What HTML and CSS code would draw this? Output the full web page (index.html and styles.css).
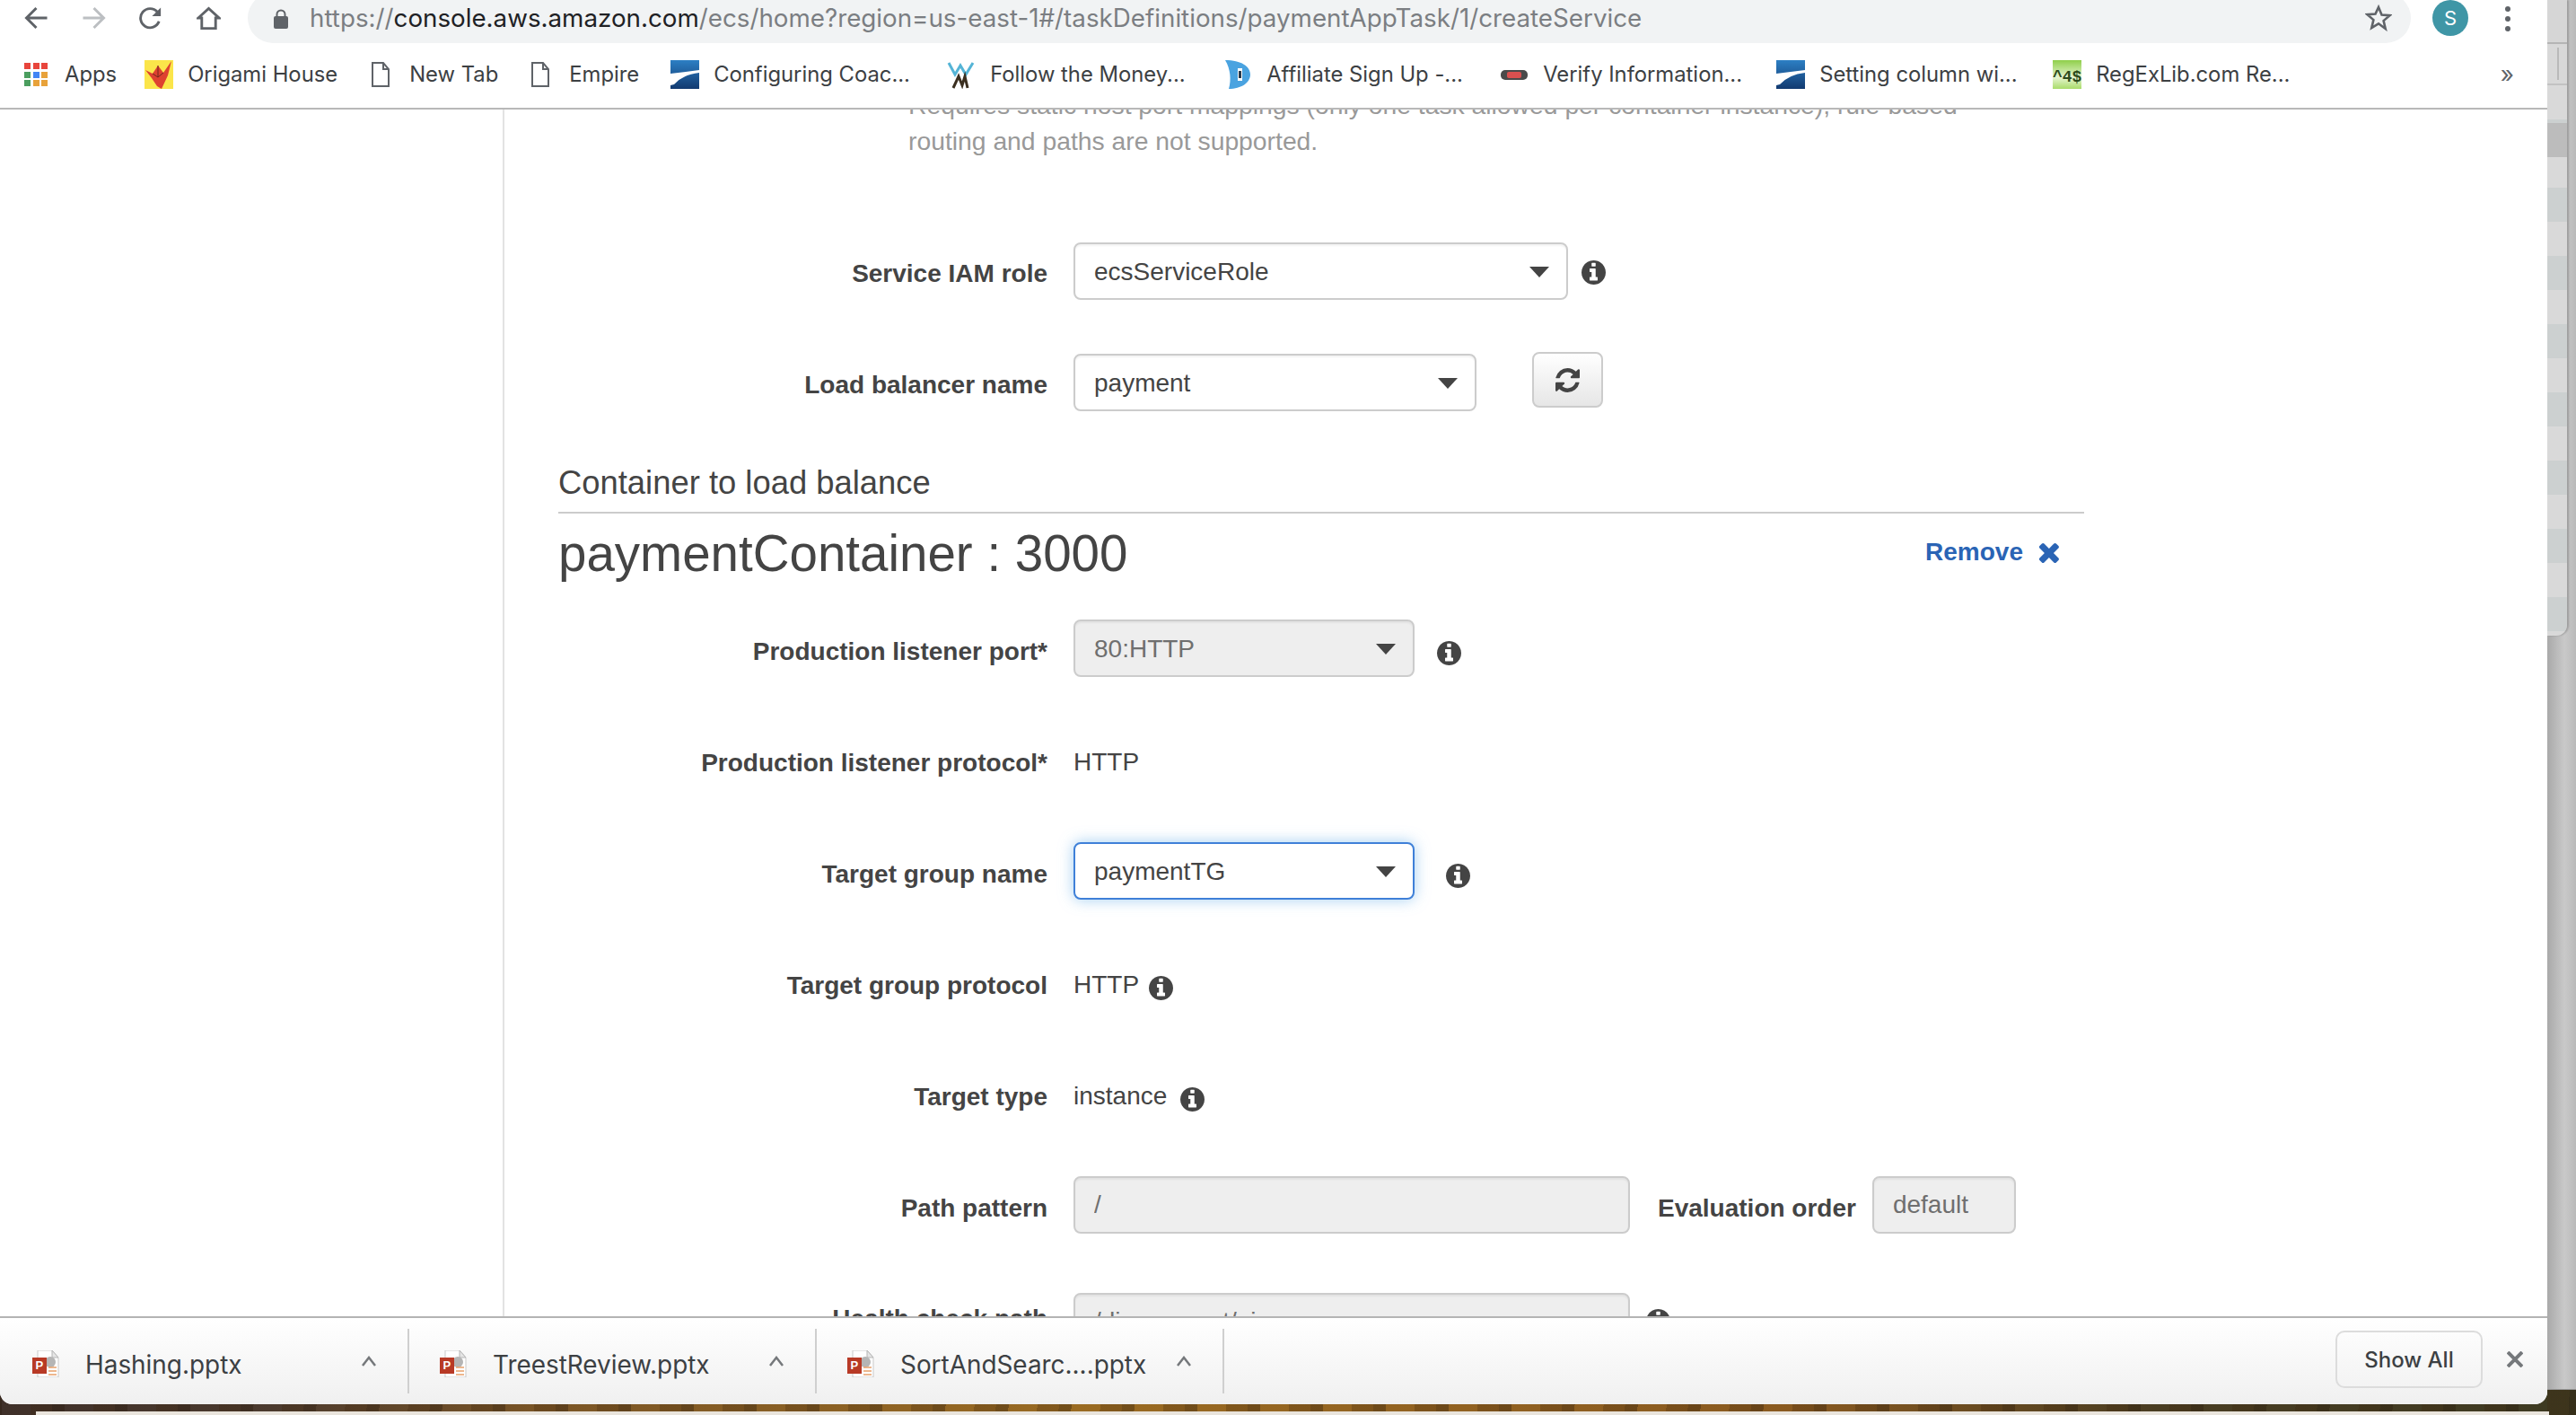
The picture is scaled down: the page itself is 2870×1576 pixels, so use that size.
FILE: index.html
```html
<!doctype html>
<html lang="en">
<head>
    <meta charset="UTF-8">
    <title>Create Service - ECS</title>
    <link rel="stylesheet" href="styles.css">
</head>
<body>

<svg class="icon-defs" width="0" height="0">
    <symbol id="fa-info" viewBox="128 128 1536 1536">
        <path d="M1152 1376v-160q0-14-9-23t-23-9h-96v-512q0-14-9-23t-23-9h-320q-14 0-23 9t-9 23v160q0 14 9 23t23 9h96v320h-96q-14 0-23 9t-9 23v160q0 14 9 23t23 9h448q14 0 23-9t9-23zm-128-896v-160q0-14-9-23t-23-9h-192q-14 0-23 9t-9 23v160q0 14 9 23t23 9h192q14 0 23-9t9-23zm640 416q0 209-103 385.5t-279.5 279.5-385.5 103-385.5-103-279.5-279.5-103-385.5 103-385.5 279.5-279.5 385.5-103 385.5 103 279.5 279.5 103 385.5z"/>
    </symbol>
    <symbol id="page" viewBox="0 0 20 28">
        <path d="M1 1h12l6 7v19H1z M13 1v7h6" fill="none" stroke="#5f6368" stroke-width="2"/>
    </symbol>
    <symbol id="coach" viewBox="0 0 32 32">
        <defs>
            <linearGradient id="coachFill" x1="0" y1="0" x2="0" y2="1">
                <stop offset="0" stop-color="#2c7fc4"/>
                <stop offset="1" stop-color="#123a70"/>
            </linearGradient>
        </defs>
        <rect width="32" height="32" fill="url(#coachFill)"/>
        <path d="M0 15L32 11v3Q14 16 4 27L0 28z" fill="#fff"/>
    </symbol>
    <symbol id="pptx" viewBox="0 0 30 30">
        <path d="M6 0h16l7 8v22H6z" fill="#fff" stroke="#c9c9c9"/>
        <path d="M22 0v8h7z" fill="#e5e5e5" stroke="#b5b5b5"/>
        <circle cx="20" cy="13" r="6" fill="#b5b5b5"/>
        <path d="M18 19h9M18 23h9M18 27h9" stroke="#e8a06a" stroke-width="1.5"/>
        <rect x="0" y="8" width="16" height="18" fill="#b83a26"/>
        <text x="3.500" y="21" class="pptx-letter">P</text>
    </symbol>
    <symbol id="chev" viewBox="0 0 18 12">
        <path d="M2 11L9 2l7 9" fill="none" stroke="#75787b" stroke-width="2.500"/>
    </symbol>
</svg>

<div class="window">

    <header class="toolbar">
        <svg class="nav-btn" viewBox="0 0 26 26"><path d="M25 13H3M13 2L2 13l11 11" fill="none" stroke="#5f6368" stroke-width="3"/></svg>
        <svg class="nav-btn" viewBox="0 0 26 26"><path d="M1 13h22M13 2l11 11-11 11" fill="none" stroke="#bcbfc2" stroke-width="3"/></svg>
        <svg class="nav-btn" viewBox="0 0 28 26"><path d="M23 17A11 11 0 1 1 21 6" fill="none" stroke="#5f6368" stroke-width="3"/><path d="M25 1v10H15z" fill="#5f6368"/></svg>
        <svg class="nav-btn" viewBox="0 0 28 26"><path d="M2 13L14 2l12 11h-4v12H6V13z" fill="none" stroke="#5f6368" stroke-width="3"/></svg>

        <div class="omnibox">
            <svg class="lock" viewBox="0 0 16 22"><path d="M3.500 9V6a4.500 4.500 0 0 1 9 0v3" fill="none" stroke="#5f6368" stroke-width="2"/><rect y="8" width="16" height="14" rx="2" fill="#5f6368"/></svg>
            <span class="url"><span class="url-dim">https://</span>console.aws.amazon.com<span class="url-dim">/ecs/home?region=us-east-1#/taskDefinitions/paymentAppTask/1/createService</span></span>
            <svg class="star" viewBox="0 0 30 30"><path d="M15 3l3.500 8.500 9 .7-6.900 5.900 2.100 8.900L15 21.300 7.300 26l2.100-8.900-6.900-5.900 9-.7z" fill="none" stroke="#5f6368" stroke-width="2.600"/></svg>
        </div>

        <div class="avatar">S</div>
        <div class="menu-dots"><i></i><i></i><i></i></div>
    </header>

    <nav class="bookmarks">
        <a class="bm">
            <span class="bm-icon apps">
                <i class="red"></i><i class="red"></i><i class="red"></i>
                <i class="green"></i><i class="blue"></i><i class="amber"></i>
                <i class="green"></i><i class="amber"></i><i class="amber"></i>
            </span>
            Apps
        </a>
        <a class="bm bm-pad">
            <svg class="bm-icon" viewBox="0 0 32 32"><rect width="32" height="32" fill="#fbe54a"/><path d="M1 11l8 4 6-9 6 8 9-13-4 16-7 15-5-3-6-9z" fill="#de4130"/><path d="M9 15l6 4 6-5M15 6v13" fill="none" stroke="#71251c"/></svg>
            Origami House
        </a>
        <a class="bm">
            <svg class="bm-icon"><use href="#page" x="6" y="2" width="20" height="28"/></svg>
            New Tab
        </a>
        <a class="bm bm-pad-lg">
            <svg class="bm-icon"><use href="#page" x="6" y="2" width="20" height="28"/></svg>
            Empire
        </a>
        <a class="bm bm-long">
            <svg class="bm-icon"><use href="#coach"/></svg>
            Configuring Coac...
        </a>
        <a class="bm bm-long">
            <svg class="bm-icon" viewBox="0 0 32 32"><path d="M2 3l7 13 6-10 6 10 8-13" fill="none" stroke="#54b4d6" stroke-width="3"/><path d="M7 31l6-13 4 10 3-10 3 13" fill="none" stroke="#3b2f20" stroke-width="3"/></svg>
            Follow the Money...
        </a>
        <a class="bm bm-long">
            <svg class="bm-icon" viewBox="0 0 32 32"><path d="M2 0c18 0 28 7 28 16S20 32 6 32C9 22 8 10 2 0z" fill="#4aa3e0"/><path d="M16 9h5v14h-5z" fill="#fff"/><path d="M17 12h3v8h-3z" fill="#26384a"/></svg>
            Affiliate Sign Up -...
        </a>
        <a class="bm bm-long">
            <svg class="bm-icon" viewBox="0 0 32 32"><rect x="1" y="11" width="30" height="11" rx="5" fill="#4a4a4a"/><rect x="8" y="13" width="16" height="7" rx="2" fill="#d9504f"/></svg>
            Verify Information...
        </a>
        <a class="bm bm-long">
            <svg class="bm-icon"><use href="#coach"/></svg>
            Setting column wi...
        </a>
        <a class="bm">
            <svg class="bm-icon" viewBox="0 0 32 32"><defs><linearGradient id="regexFill" x1="0" y1="0" x2="0" y2="1"><stop offset="0" stop-color="#8fcf4a"/><stop offset=".6" stop-color="#e6f5d0"/><stop offset="1" stop-color="#a9dc6a"/></linearGradient></defs><rect width="32" height="32" fill="url(#regexFill)"/><text x="0" y="24" class="regex-mark">^4$</text></svg>
            RegExLib.com Re...
        </a>
        <span class="bm-more">»</span>
    </nav>

    <main class="console">
        <aside class="side"></aside>

        <section class="content">
            <p class="help-text">Requires static host port mappings (only one task allowed per container instance), rule-based<br>routing and paths are not supported.</p>

            <div class="form-row form-row-tight">
                <label class="form-label">Service IAM role</label>
                <div class="select-wrap select-xl"><select class="form-input"><option>ecsServiceRole</option></select></div>
                <svg class="info info-near"><use href="#fa-info"/></svg>
            </div>

            <div class="form-row form-row-tight">
                <label class="form-label">Load balancer name</label>
                <div class="select-wrap select-lg"><select class="form-input"><option>payment</option></select></div>
                <button class="refresh-btn" type="button">
                    <svg viewBox="128 128 1536 1536"><path d="M1639 1056q0 5-1 7-64 268-268 434.500t-478 166.500q-146 0-282.500-55t-243.500-157l-129 129q-19 19-45 19t-45-19-19-45v-448q0-26 19-45t45-19h448q26 0 45 19t19 45-19 45l-137 137q71 66 161 102t187 36q134 0 250-65t186-179q11-17 53-117 8-23 30-23h192q13 0 22.500 9.500t9.500 22.500zm25-800v448q0 26-19 45t-45 19h-448q-26 0-45-19t-19-45 19-45l138-138q-148-137-349-137-134 0-250 65t-186 179q-11 17-53 117-8 23-30 23h-199q-13 0-22.500-9.500t-9.500-22.500v-7q65-268 270-434.500t480-166.500q146 0 284 55.500t245 156.500l130-129q19-19 45-19t45 19 19 45z"/></svg>
                </button>
            </div>

            <h4 class="section-title">Container to load balance</h4>
            <div class="container-head">
                <h3 class="container-name">paymentContainer : 3000</h3>
                <a class="remove-link">Remove
                    <svg viewBox="258 258 1232 1296"><path d="M1490 1322q0 40-28 68l-136 136q-28 28-68 28t-68-28l-294-294-294 294q-28 28-68 28t-68-28l-136-136q-28-28-28-68t28-68l294-294-294-294q-28-28-28-68t28-68l136-136q28-28 68-28t68 28l294 294 294-294q28-28 68-28t68 28l136 136q28 28 28 68t-28 68l-294 294 294 294q28 28 28 68z"/></svg>
                </a>
            </div>

            <div class="form-row">
                <label class="form-label">Production listener port*</label>
                <div class="select-wrap select-md"><select class="form-input" disabled><option>80:HTTP</option></select></div>
                <svg class="info info-mid"><use href="#fa-info"/></svg>
            </div>

            <div class="form-row">
                <label class="form-label">Production listener protocol*</label>
                <span class="form-value">HTTP</span>
            </div>

            <div class="form-row">
                <label class="form-label">Target group name</label>
                <div class="select-wrap select-md"><select class="form-input is-focus"><option>paymentTG</option></select></div>
                <svg class="info info-far"><use href="#fa-info"/></svg>
            </div>

            <div class="form-row">
                <label class="form-label">Target group protocol</label>
                <span class="form-value">HTTP</span>
                <svg class="info info-value info-http"><use href="#fa-info"/></svg>
            </div>

            <div class="form-row">
                <label class="form-label">Target type</label>
                <span class="form-value">instance</span>
                <svg class="info info-value"><use href="#fa-info"/></svg>
            </div>

            <div class="form-row form-row-path">
                <label class="form-label">Path pattern</label>
                <input class="form-input input-path" type="text" value="/" disabled>
                <label class="form-label form-label-inline">Evaluation order</label>
                <input class="form-input input-order" type="text" value="default" disabled>
            </div>

            <div class="form-row form-row-health">
                <label class="form-label">Health check path</label>
                <input class="form-input input-path" type="text" value="/dispayment/ping" disabled>
                <svg class="info info-health"><use href="#fa-info"/></svg>
            </div>
        </section>
    </main>

    <footer class="downloads">
        <div class="dl-item">
            <svg class="dl-icon"><use href="#pptx"/></svg>
            <span class="dl-name">Hashing.pptx</span>
            <svg class="dl-chev"><use href="#chev"/></svg>
        </div>
        <div class="dl-item">
            <svg class="dl-icon"><use href="#pptx"/></svg>
            <span class="dl-name">TreestReview.pptx</span>
            <svg class="dl-chev"><use href="#chev"/></svg>
        </div>
        <div class="dl-item">
            <svg class="dl-icon"><use href="#pptx"/></svg>
            <span class="dl-name">SortAndSearc....pptx</span>
            <svg class="dl-chev"><use href="#chev"/></svg>
        </div>
        <button class="show-all" type="button">Show All</button>
        <svg class="dl-close" viewBox="0 0 18 18"><path d="M1 1l16 16M17 1L1 17" fill="none" stroke="#75787b" stroke-width="4"/></svg>
    </footer>
</div>

<div class="behind">
    <div class="behind-col">
        <div class="behind-tab"></div>
        <div class="behind-bar"><i></i></div>
        <div class="behind-stripes"></div>
    </div>
</div>

</body>
</html>
```

FILE: styles.css
```css
* {
    box-sizing: border-box;
}

html, body {
    height: 100%;
}

body {
    margin: 0;
    height: 1576px;
    overflow: hidden;
    display: flex;
    align-items: flex-start;
    color: #444;
    font-family: "Liberation Sans", Arial, sans-serif;
    font-size: 28px;
    line-height: 40px;
    /* desktop wallpaper + the next window's top edge */
    background:
        linear-gradient(#e9e4dc, #e9e4dc) 40px 1572px / 2800px 4px no-repeat,
        repeating-linear-gradient(93deg, rgba(40, 25, 10, .35) 0 14px, transparent 14px 46px, rgba(60, 35, 10, .25) 46px 70px),
        linear-gradient(90deg, #3f3029 0, #4b3a2e 300px, #7a5526 600px, #9a6b22 1200px, #8a5a20 2000px, #4a3d22 2400px, #3d3a22 2870px);
}

.icon-defs {
    position: absolute;
}

/* browser window */
.window {
    width: 2838px;
    height: 1564px;
    flex: none;
    display: flex;
    flex-direction: column;
    background: #fff;
    border-radius: 0 0 14px 14px;
    overflow: hidden;
}

.toolbar {
    height: 48px;
    flex: none;
    display: flex;
    align-items: flex-start;
    padding-left: 27px;
}
.nav-btn {
    width: 27px;
    height: 26px;
    margin: 7px 37px 0 0;
    flex: none;
}
.omnibox {
    width: 2410px;
    height: 56px;
    margin: -8px 0 0 -7px;
    flex: none;
    display: flex;
    align-items: center;
    padding: 0 21px 0 29px;
    background: #f1f3f4;
    border-radius: 28px;
    overflow: hidden;
}
.lock {
    width: 16px;
    height: 22px;
    flex: none;
    margin-top: 1px;
}
.url {
    margin-left: 24px;
    font-family: Inter, "Liberation Sans", sans-serif;
    font-size: 27.75px;
    white-space: nowrap;
    color: #202124;
    flex: 1;
}
.url-dim {
    color: #7b7e82;
}
.star {
    width: 30px;
    height: 30px;
    flex: none;
}
.avatar {
    width: 40px;
    height: 40px;
    margin-left: 24px;
    flex: none;
    border-radius: 50%;
    background: #3f96a6;
    color: #fff;
    font-family: Inter, sans-serif;
    font-size: 22px;
    line-height: 40px;
    text-align: center;
}
.menu-dots {
    margin: 7px 0 0 41px;
    display: flex;
    flex-direction: column;
    gap: 5px;
}
.menu-dots i {
    display: block;
    width: 6px;
    height: 6px;
    border-radius: 50%;
    background: #5f6368;
}

/* bookmarks bar */
.bookmarks {
    height: 74px;
    flex: none;
    display: flex;
    align-items: center;
    gap: 31px;
    padding: 0 0 2px 27px;
    border-bottom: 2px solid #b8b8b8;
    font-family: Inter, "Liberation Sans", sans-serif;
    font-size: 23.8px;
    color: #3c4043;
    white-space: nowrap;
}
.bm {
    display: flex;
    align-items: center;
    gap: 16px;
    flex: none;
}
.bm-pad {
    margin-right: 1px;
}
.bm-pad-lg {
    margin-right: 4px;
}
.bm-long {
    width: 308px;
    margin-right: -31px;
}
.bm-icon {
    width: 32px;
    height: 32px;
    flex: none;
    display: block;
}
.apps {
    width: 26px;
    height: 26px;
    margin-right: 3px;
    display: grid;
    grid-template-columns: repeat(3, 7px);
    grid-auto-rows: 7px;
    gap: 2.500px;
}
.apps i {
    display: block;
}
.apps .red { background: #e8453c; }
.apps .green { background: #4b9e5f; }
.apps .blue { background: #4285f4; }
.apps .amber { background: #e8a23a; }
.regex-mark {
    font-family: "Liberation Mono", monospace;
    font-size: 18px;
    font-weight: bold;
    fill: #2c4a1c;
}
.bm-more {
    margin-left: auto;
    margin-right: 37px;
    font-size: 26px;
    color: #5f6368;
}

/* page */
.console {
    flex: 1;
    min-height: 0;
    display: flex;
    overflow: hidden;
}
.side {
    width: 562px;
    flex: none;
    border-right: 2px solid #e3e3e3;
}
.content {
    width: 1760px;
    flex: none;
    margin-top: -24px;
    padding-left: 60px;
}
.help-text {
    margin: -1px 0 93px 390px;
    color: #999;
    font-size: 28.3px;
    white-space: nowrap;
}

.form-row {
    display: flex;
    align-items: flex-start;
    height: 64px;
    margin-bottom: 60px;
}
.form-row-path {
    margin-bottom: 66px;
}
.form-label {
    width: 545px;
    margin-right: 29px;
    padding-top: 16px;
    flex: none;
    font-weight: bold;
    text-align: right;
    white-space: nowrap;
}
.form-row-tight .form-label {
    padding-top: 15px;
}
.form-row-health .form-label {
    padding-top: 9px;
}
.form-label-inline {
    width: auto;
    margin: 0 18px 0 31px;
}
.form-value {
    padding-top: 15px;
}

.form-input {
    display: block;
    width: 100%;
    height: 64px;
    padding: 0 21px;
    appearance: none;
    -webkit-appearance: none;
    border: 2px solid #ccc;
    border-radius: 8px;
    background: #fff;
    box-shadow: inset 0 2px 2px rgba(0, 0, 0, .05);
    color: #444;
    font: 28px "Liberation Sans", Arial, sans-serif;
    opacity: 1;
}
.form-input:disabled {
    background: #eee;
    color: #6f6f6f;
}
.form-input.is-focus {
    border-color: #3f80d8;
    box-shadow: 0 0 16px rgba(102, 175, 233, .6);
}

.select-wrap {
    position: relative;
    flex: none;
}
.select-wrap::after {
    content: "";
    position: absolute;
    top: 27px;
    right: 21px;
    border: 11px solid transparent;
    border-top: 12px solid #444;
    border-bottom: 0;
    pointer-events: none;
}
.select-xl { width: 551px; }
.select-lg { width: 449px; }
.select-md { width: 380px; }

.input-path {
    width: 620px;
    flex: none;
}
.input-order {
    width: 160px;
    flex: none;
}

.info {
    width: 27px;
    height: 27px;
    flex: none;
    fill: #444;
}
.info-near { margin: 20px 0 0 15px; }
.info-mid { margin: 24px 0 0 25px; }
.info-far { margin: 24px 0 0 35px; }
.info-value { margin: 25px 0 0 15px; }
.info-http { margin-left: 11px; }
.info-health { margin: 18px 0 0 18px; }

.refresh-btn {
    width: 79px;
    height: 62px;
    margin: -2px 0 0 62px;
    padding: 0;
    flex: none;
    display: flex;
    align-items: center;
    justify-content: center;
    border: 2px solid #ccc;
    border-radius: 8px;
    background: linear-gradient(#fff, #e6e6e6);
}
.refresh-btn svg {
    width: 27px;
    height: 27px;
    fill: #444;
}

.section-title {
    margin: 0;
    padding: 0 0 12px;
    border-bottom: 2px solid #ccc;
    font-size: 36.4px;
    font-weight: normal;
    line-height: 40px;
}
.container-head {
    display: flex;
    justify-content: space-between;
    align-items: flex-start;
    margin: 12px 0 40px;
    padding-right: 28px;
}
.container-name {
    margin: 0;
    font-size: 56.5px;
    font-weight: normal;
    line-height: 66px;
}
.remove-link {
    display: flex;
    align-items: center;
    gap: 17px;
    margin-top: 11px;
    color: #2a64b5;
    font-weight: bold;
}
.remove-link svg {
    width: 23px;
    height: 24px;
    fill: #2a64b5;
}

/* downloads shelf */
.downloads {
    height: 98px;
    flex: none;
    display: flex;
    align-items: flex-start;
    padding-left: 2px;
    border-top: 2px solid #b4b4b4;
    background: linear-gradient(#fff, #f0f0f0);
    font-family: Inter, "Liberation Sans", sans-serif;
    color: #3c4043;
}
.dl-item {
    width: 454px;
    height: 72px;
    margin-top: 12px;
    flex: none;
    display: flex;
    align-items: center;
    padding-left: 34px;
    border-right: 2px solid #cfcfcf;
}
.dl-icon {
    width: 30px;
    height: 30px;
    flex: none;
    margin-top: 6px;
}
.pptx-letter {
    font: bold 13px "Liberation Sans", sans-serif;
    fill: #fff;
}
.dl-name {
    margin-left: 29px;
    padding-top: 8px;
    width: 307px;
    flex: none;
    font-size: 27.9px;
    white-space: nowrap;
}
.dl-chev {
    width: 18px;
    height: 12px;
    flex: none;
}
.show-all {
    width: 164px;
    height: 64px;
    margin: 14px 0 0 1238px;
    flex: none;
    padding: 0;
    border: 2px solid #dcdcdc;
    border-radius: 10px;
    background: transparent;
    color: #3c4043;
    font: 500 24px Inter, "Liberation Sans", sans-serif;
}
.dl-close {
    width: 18px;
    height: 18px;
    margin: 37px 0 0 27px;
    flex: none;
}

/* window behind, to the right */
.behind {
    width: 32px;
    height: 1548px;
    flex: none;
    background: linear-gradient(90deg, #a9a9a9, #c9c9c9 60%, #b9b9b9);
    box-shadow: inset 0 -1px 0 #999;
}
.behind-col {
    width: 22px;
    height: 708px;
    display: flex;
    flex-direction: column;
    overflow: hidden;
    border-radius: 0 0 12px 0;
    box-shadow: 2px 0 2px rgba(0, 0, 0, .2);
}
.behind-tab {
    height: 49px;
    flex: none;
    background: #d6d6d6;
    border-bottom: 2px solid #b5b5b5;
}
.behind-bar {
    height: 46px;
    flex: none;
    padding: 4px 0 0 11px;
    background: #d8d8d8;
    border-bottom: 2px solid #c2c2c2;
}
.behind-bar i {
    display: block;
    width: 2px;
    height: 36px;
    background: #b9b9b9;
}
.behind-stripes {
    flex: 1;
    background:
        linear-gradient(#bcbcbc, #bcbcbc) 0 42px / 100% 38px no-repeat,
        repeating-linear-gradient(#d9d9d9 0 38px, #ccd0d0 38px 76px);
}
```
